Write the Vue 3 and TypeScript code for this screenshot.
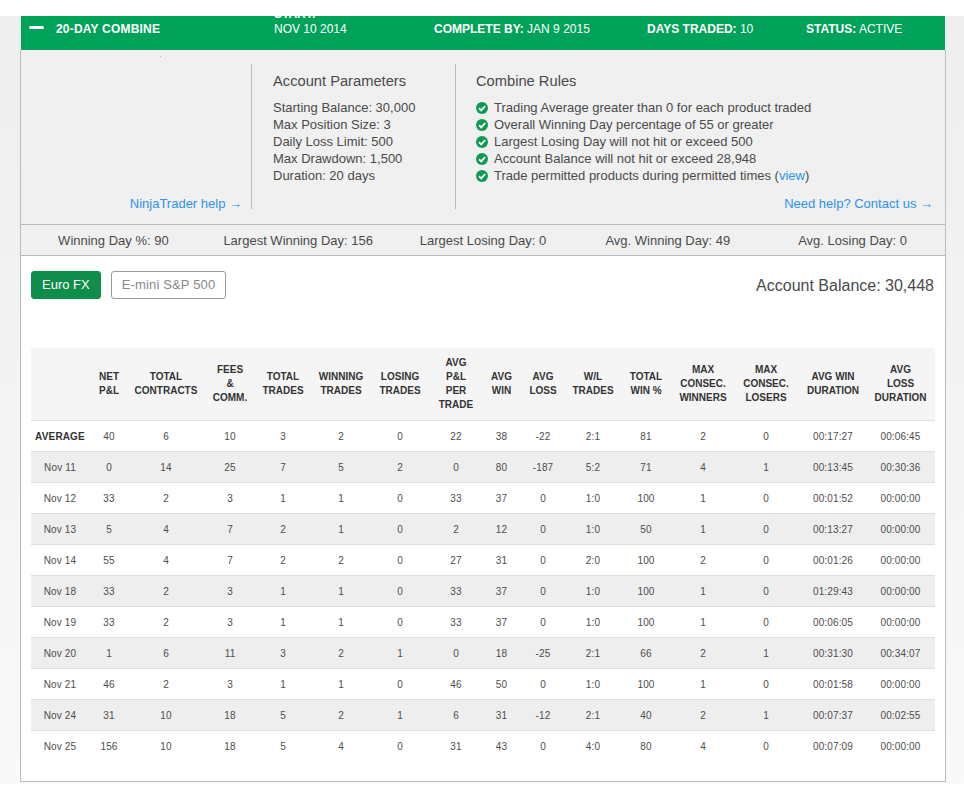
<template>
  <div class="page">
    <div class="card">
      <div class="head">
        <div class="head-title">
          <span class="minus"></span>
          <b>20-Day Combine</b>
        </div>
        <div class="head-start">
          <b class="start-label">Start:</b>
          <span>Nov 10 2014</span>
        </div>
        <div class="head-complete"><b>Complete by:</b> Jan 9 2015</div>
        <div class="head-days"><b>Days traded:</b> 10</div>
        <div class="head-status"><b>Status:</b> Active</div>
      </div>

      <div class="body">
        <div class="panel">
          <span class="speck"></span>
          <div class="col col-help">
            <a class="link">NinjaTrader help →</a>
          </div>
          <div class="col col-params">
            <h3>Account Parameters</h3>
            <p v-for="line in params" :key="line">{{ line }}</p>
          </div>
          <div class="col col-rules">
            <h3>Combine Rules</h3>
            <div class="rules">
              <div v-for="rule in rules" :key="rule" class="rule">
                <svg class="check" viewBox="0 0 12 12" width="12" height="12">
                  <circle cx="6" cy="6" r="6" fill="#0e9a55" />
                  <path d="M3 6.2 5.2 8.4 9.2 4" fill="none" stroke="#fff" stroke-width="1.8" />
                </svg>
                <span>{{ rule }}</span>
              </div>
              <div class="rule">
                <svg class="check" viewBox="0 0 12 12" width="12" height="12">
                  <circle cx="6" cy="6" r="6" fill="#0e9a55" />
                  <path d="M3 6.2 5.2 8.4 9.2 4" fill="none" stroke="#fff" stroke-width="1.8" />
                </svg>
                <span>Trade permitted products during permitted times (<a class="link">view</a>)</span>
              </div>
            </div>
            <a class="link contact">Need help? Contact us →</a>
          </div>
        </div>

        <div class="stats">
          <div v-for="stat in stats" :key="stat">{{ stat }}</div>
        </div>

        <div class="products">
          <button class="btn active">Euro FX</button>
          <button class="btn wide">E-mini S&amp;P 500</button>
          <div class="balance">Account Balance: 30,448</div>
        </div>

        <table class="grid">
          <colgroup>
            <col v-for="(w, i) in colWidths" :key="i" :style="{ width: w + 'px' }" />
          </colgroup>
          <thead>
            <tr>
              <th></th>
              <th v-for="h in headers" :key="h.join()">
                <div v-for="part in h" :key="part">{{ part }}</div>
              </th>
            </tr>
          </thead>
          <tbody>
            <tr v-for="(row, r) in rows" :key="r" :class="{ first: r === 0 }">
              <td v-for="(cell, c) in row" :key="c">{{ cell }}</td>
            </tr>
          </tbody>
        </table>
      </div>
    </div>
  </div>
</template>

<script setup lang="ts">
const params = [
  'Starting Balance: 30,000',
  'Max Position Size: 3',
  'Daily Loss Limit: 500',
  'Max Drawdown: 1,500',
  'Duration: 20 days',
];

const rules = [
  'Trading Average greater than 0 for each product traded',
  'Overall Winning Day percentage of 55 or greater',
  'Largest Losing Day will not hit or exceed 500',
  'Account Balance will not hit or exceed 28,948',
];

const stats = [
  'Winning Day %: 90',
  'Largest Winning Day: 156',
  'Largest Losing Day: 0',
  'Avg. Winning Day: 49',
  'Avg. Losing Day: 0',
];

const colWidths = [58, 40, 74, 54, 52, 64, 54, 58, 33, 50, 50, 56, 58, 68, 66, 69];

const headers: string[][] = [
  ['NET', 'P&L'],
  ['TOTAL', 'CONTRACTS'],
  ['FEES', '&', 'COMM.'],
  ['TOTAL', 'TRADES'],
  ['WINNING', 'TRADES'],
  ['LOSING', 'TRADES'],
  ['AVG', 'P&L', 'PER', 'TRADE'],
  ['AVG', 'WIN'],
  ['AVG', 'LOSS'],
  ['W/L', 'TRADES'],
  ['TOTAL', 'WIN %'],
  ['MAX', 'CONSEC.', 'WINNERS'],
  ['MAX', 'CONSEC.', 'LOSERS'],
  ['AVG WIN', 'DURATION'],
  ['AVG', 'LOSS', 'DURATION'],
];

const rows: string[][] = [
  ['AVERAGE', '40', '6', '10', '3', '2', '0', '22', '38', '-22', '2:1', '81', '2', '0', '00:17:27', '00:06:45'],
  ['Nov 11', '0', '14', '25', '7', '5', '2', '0', '80', '-187', '5:2', '71', '4', '1', '00:13:45', '00:30:36'],
  ['Nov 12', '33', '2', '3', '1', '1', '0', '33', '37', '0', '1:0', '100', '1', '0', '00:01:52', '00:00:00'],
  ['Nov 13', '5', '4', '7', '2', '1', '0', '2', '12', '0', '1:0', '50', '1', '0', '00:13:27', '00:00:00'],
  ['Nov 14', '55', '4', '7', '2', '2', '0', '27', '31', '0', '2:0', '100', '2', '0', '00:01:26', '00:00:00'],
  ['Nov 18', '33', '2', '3', '1', '1', '0', '33', '37', '0', '1:0', '100', '1', '0', '01:29:43', '00:00:00'],
  ['Nov 19', '33', '2', '3', '1', '1', '0', '33', '37', '0', '1:0', '100', '1', '0', '00:06:05', '00:00:00'],
  ['Nov 20', '1', '6', '11', '3', '2', '1', '0', '18', '-25', '2:1', '66', '2', '1', '00:31:30', '00:34:07'],
  ['Nov 21', '46', '2', '3', '1', '1', '0', '46', '50', '0', '1:0', '100', '1', '0', '00:01:58', '00:00:00'],
  ['Nov 24', '31', '10', '18', '5', '2', '1', '6', '31', '-12', '2:1', '40', '2', '1', '00:07:37', '00:02:55'],
  ['Nov 25', '156', '10', '18', '5', '4', '0', '31', '43', '0', '4:0', '80', '4', '0', '00:07:09', '00:00:00'],
];
</script>

<style>
html,
body {
  background: #fff;
}
</style>

<style scoped>
.page {
  margin-top: 16px;
  height: 768px;
  padding: 0 18px 0 20px;
  box-sizing: border-box;
  background: linear-gradient(#eeeeee, #f9f9f9);
  font-family: "Liberation Sans", Arial, sans-serif;
  color: #4a4a4a;
}

.card {
  width: 926px;
  height: 766px;
  display: flex;
  flex-direction: column;
}

.head {
  flex: none;
  height: 34px;
  margin: 0 1px;
  overflow: hidden;
  background: #00a25a;
  color: #fff;
  font-size: 12px;
  line-height: 26px;
  text-transform: uppercase;
  display: flex;
}

.head-title {
  width: 253px;
  padding-left: 8px;
  box-sizing: border-box;
  display: flex;
  align-items: center;
  height: 26px;
  letter-spacing: 0.2px;
}

.minus {
  width: 15px;
  height: 3px;
  border-radius: 2px;
  background: #fff;
  margin: 0 12px 3px 0;
}

.head-start {
  width: 160px;
  display: flex;
  flex-direction: column;
  margin-top: -9px;
}

.start-label {
  line-height: 14px;
  margin-bottom: -5px;
}

.head-complete {
  width: 213px;
}

.head-days {
  width: 159px;
}

.body {
  flex: 1;
  background: #fff;
  border: 1px solid #bbb;
  border-top: none;
}

.panel {
  position: relative;
  height: 174px;
  box-sizing: border-box;
  padding: 14px 0 15px;
  background: #f0f0f0;
  display: flex;
  font-size: 13px;
  line-height: 17px;
}

.speck {
  position: absolute;
  left: 139px;
  top: 6px;
  width: 1px;
  height: 1px;
  background: #bbb;
}

.col {
  box-sizing: border-box;
  position: relative;
}

.col-help {
  width: 231px;
  border-right: 1px solid #bbb;
  display: flex;
  justify-content: flex-end;
  align-items: flex-end;
  padding-right: 9px;
}

.col-help .link {
  margin-bottom: -3px;
}

.col-params {
  width: 204px;
  padding-left: 21px;
  border-right: 1px solid #bbb;
}

.col-rules {
  flex: 1;
  padding-left: 20px;
  padding-right: 12px;
  display: flex;
  flex-direction: column;
}

h3 {
  margin: 8px 0 9px;
  font-size: 14.7px;
  line-height: 18px;
  font-weight: 400;
}

p {
  margin: 0;
}

.rule {
  display: flex;
  align-items: center;
  gap: 6px;
}

.check {
  flex: none;
}

.link {
  color: #2d93ee;
  text-decoration: none;
}

.contact {
  align-self: flex-end;
  margin-top: auto;
  margin-bottom: -3px;
}

.stats {
  height: 32px;
  box-sizing: border-box;
  border-top: 1px solid #bbb;
  border-bottom: 1px solid #bbb;
  background: #f0f0f0;
  display: grid;
  grid-template-columns: repeat(5, 1fr);
  font-size: 13px;
  line-height: 31px;
  text-align: center;
}

.products {
  display: flex;
  align-items: flex-start;
  gap: 10px;
  padding: 15px 11px 0 10px;
  height: 92px;
  box-sizing: border-box;
}

.btn {
  height: 28px;
  padding: 0 10px 2px;
  border: 1px solid #999;
  border-radius: 3px;
  background: #fff;
  color: #888;
  font: 13px "Liberation Sans", Arial, sans-serif;
}

.btn.wide {
  letter-spacing: 0.15px;
}

.btn.active {
  border-color: #0e8e4a;
  background: #0e8e4a;
  color: #fff;
}

.balance {
  margin-left: auto;
  font-size: 16px;
  line-height: 29px;
}

.grid {
  margin-left: 10px;
  width: 904px;
  table-layout: fixed;
  border-collapse: collapse;
  font-size: 10px;
  color: #4d4d4d;
}

th {
  height: 72px;
  padding: 0;
  background: #f5f5f5;
  border-bottom: 1px solid #e0e0e0;
  font-weight: 700;
  line-height: 14px;
  color: #333;
  vertical-align: middle;
}

td {
  height: 30px;
  padding: 0;
  text-align: center;
  border-bottom: 1px solid #ddd;
  letter-spacing: 0.15px;
}

tbody tr:nth-child(even) td {
  background: #eee;
}

tbody tr:last-child td {
  border-bottom: none;
}

tr.first td:first-child {
  font-weight: 700;
  color: #333;
}
</style>
